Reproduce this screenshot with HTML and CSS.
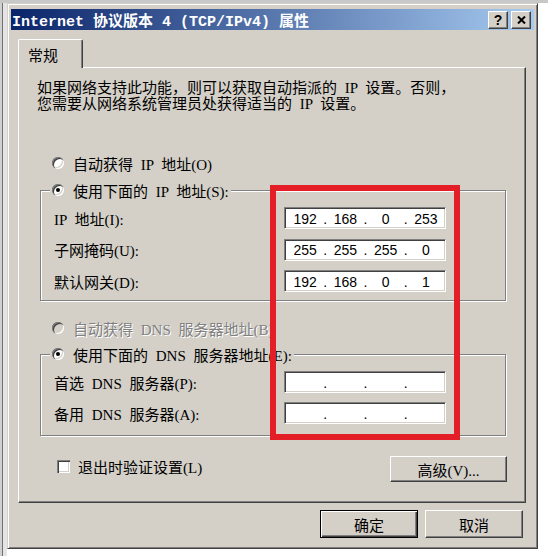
FILE: index.html
```html
<!DOCTYPE html>
<html lang="zh-CN">
<head>
<meta charset="utf-8">
<title>Internet 协议版本 4 (TCP/IPv4) 属性</title>
<link rel="stylesheet" href="styles.css">
</head>
<body>
<div class="desk">
  <div class="dialog">
    <div class="titlebar">
      <span class="title">Internet 协议版本 4 (TCP/IPv4) 属性</span>
      <div class="tbtns">
        <span class="tbtn">?</span>
        <span class="tbtn"><svg class="xicon" viewBox="0 0 9 8" width="9" height="8"><path d="M1 0.5 L8 7.5 M8 0.5 L1 7.5" stroke="#000" stroke-width="2" fill="none"/></svg></span>
      </div>
    </div>
    <div class="content">
      <div class="tabs"><div class="tab">常规</div></div>
      <div class="panel">
        <p class="intro">如果网络支持此功能，则可以获取自动指派的 IP 设置。否则，<br>您需要从网络系统管理员处获得适当的 IP 设置。</p>

        <div class="radio-row r1"><span class="radio"></span><span>自动获得 IP 地址(O)</span></div>

        <div class="group g1">
          <div class="legend"><span class="radio on"></span><span>使用下面的 IP 地址(S):</span></div>
          <div class="fields">
            <span>IP 地址(I):</span>
            <div class="ip"><span>192</span><i>.</i><span>168</span><i>.</i><span>0</span><i>.</i><span>253</span></div>
            <span>子网掩码(U):</span>
            <div class="ip"><span>255</span><i>.</i><span>255</span><i>.</i><span>255</span><i>.</i><span>0</span></div>
            <span>默认网关(D):</span>
            <div class="ip"><span>192</span><i>.</i><span>168</span><i>.</i><span>0</span><i>.</i><span>1</span></div>
          </div>
        </div>

        <div class="radio-row r3 disabled"><span class="radio"></span><span>自动获得 DNS 服务器地址(B)</span></div>

        <div class="group g2">
          <div class="legend"><span class="radio on"></span><span>使用下面的 DNS 服务器地址(E):</span></div>
          <div class="fields f2">
            <span>首选 DNS 服务器(P):</span>
            <div class="ip"><span></span><i>.</i><span></span><i>.</i><span></span><i>.</i><span></span></div>
            <span>备用 DNS 服务器(A):</span>
            <div class="ip"><span></span><i>.</i><span></span><i>.</i><span></span><i>.</i><span></span></div>
          </div>
        </div>

        <div class="bottom-row">
          <div class="check-row"><span class="check"></span><span>退出时验证设置(L)</span></div>
          <div class="btn adv">高级(V)...</div>
        </div>
      </div>
      <div class="actions">
        <div class="btn default">确定</div>
        <div class="btn">取消</div>
      </div>
    </div>
  </div>
  <div class="mark"></div>
</div>
</body>
</html>
```
FILE: styles.css
```css
* { box-sizing: border-box; }
html, body { margin: 0; padding: 0; }
body {
  width: 548px;
  height: 556px;
  overflow: hidden;
  background: #fff;
  font-family: "Liberation Serif", "Noto Sans CJK SC", serif;
  font-size: 15px;
  color: #000;
  word-spacing: 4px;
}
.desk {
  position: relative;
  width: 548px;
  height: 556px;
  padding: 3px 0 0 7px;
  background:
    linear-gradient(#c8c8c8, #c8c8c8) left top / 548px 3px no-repeat,
    linear-gradient(to right, #d0d0d0 0 2px, #707070 2px 3px, #e4e4e4 3px 7px) left top / 7px 556px no-repeat,
    #fff;
}
.dialog {
  width: 531px;
  height: 546px;
  background: #d4d0c8;
  border: 1px solid;
  border-color: #d4d0c8 #404040 #404040 #d4d0c8;
  box-shadow: inset 1px 1px 0 #fff, inset -1px -1px 0 #808080;
  padding: 5px 3px 0 3px;
}
.titlebar {
  height: 21px;
  display: flex;
  align-items: center;
  justify-content: space-between;
  background: linear-gradient(to right, #0a246a, #a6caf0);
  padding: 0 3px 0 1px;
}
.title {
  color: #fff;
  font: bold 15px "Liberation Mono", "Noto Sans CJK SC", monospace;
  word-spacing: 0;
  white-space: nowrap;
}
.tbtns { display: flex; gap: 3px; }
.tbtn {
  width: 20px;
  height: 18px;
  background: #d4d0c8;
  border: 1px solid;
  border-color: #fff #404040 #404040 #fff;
  box-shadow: inset -1px -1px 0 #808080;
  display: flex;
  align-items: center;
  justify-content: center;
  font: bold 14px "Liberation Sans", sans-serif;
  line-height: 1;
}
.xicon { display: block; }
.content { padding: 9px 8px 0 7px; }
.tabs { display: flex; height: 29px; margin-bottom: -1px; }
.tab {
  position: relative;
  z-index: 1;
  width: 65px;
  height: 29px;
  background: #d4d0c8;
  border-top: 1px solid #fff;
  border-left: 1px solid #fff;
  border-right: 1px solid #404040;
  box-shadow: inset -1px 0 0 #808080;
  border-radius: 2px 2px 0 0;
  padding-left: 9px;
  display: flex;
  align-items: center;
}
.panel {
  height: 436px;
  border: 1px solid;
  border-color: #fff #404040 #404040 #fff;
  box-shadow: inset -1px -1px 0 #808080;
  padding: 12px 0 0 18px;
}
.intro { margin: 0; line-height: 16px; white-space: nowrap; }
.radio-row { display: flex; align-items: center; gap: 9px; height: 20px; white-space: nowrap; }
.r1 { margin: 41px 0 0 15px; }
.r3 { margin: 17px 0 0 15px; }
.disabled { color: #808080; text-shadow: 1px 1px 0 #fff; }
.radio {
  flex: none;
  width: 12px;
  height: 12px;
  border-radius: 50%;
  background: #fff;
  box-shadow: inset 1px 1px 0 #808080, inset 2px 2px 0 #404040, inset -1px -1px 0 #fff, inset -2px -2px 0 #d4d0c8;
  display: flex;
  align-items: center;
  justify-content: center;
}
.disabled .radio { background: #d4d0c8; }
.radio.on::after {
  content: "";
  width: 4px;
  height: 4px;
  border-radius: 50%;
  background: #000;
}
.group {
  width: 466px;
  margin-left: 3px;
  border: 1px solid #808080;
  box-shadow: 1px 1px 0 #fff, inset 1px 1px 0 #fff;
}
.g1 { margin-top: 17px; padding-bottom: 8px; }
.g2 { margin-top: 16px; padding-bottom: 11px; }
.legend {
  display: flex;
  align-items: center;
  gap: 9px;
  width: fit-content;
  height: 20px;
  margin: -11px 0 0 9px;
  padding: 0 2px;
  background: #d4d0c8;
  white-space: nowrap;
}
.fields {
  display: grid;
  grid-template-columns: 230px 162px;
  grid-auto-rows: 22px;
  row-gap: 9.5px;
  align-items: center;
  margin: 7px 0 0 13px;
  white-space: nowrap;
}
.f2 { row-gap: 9px; }
.ip {
  height: 22px;
  background: #fff;
  border: 1px solid;
  border-color: #808080 #fff #fff #808080;
  box-shadow: inset 1px 1px 0 #404040, inset -1px -1px 0 #d4d0c8;
  display: grid;
  grid-template-columns: 1fr 4px 1fr 4px 1fr 4px 1fr;
  align-items: center;
  padding: 1px 1px 0 2px;
  font: 14px "Liberation Sans", sans-serif;
  word-spacing: 0;
}
.ip span { text-align: center; }
.ip i { font-style: normal; text-align: center; }
.bottom-row {
  display: flex;
  justify-content: space-between;
  align-items: flex-start;
  width: 470px;
  margin-top: 20px;
}
.check-row { display: flex; align-items: center; gap: 8px; height: 20px; margin-left: 20px; white-space: nowrap; }
.check {
  flex: none;
  width: 13px;
  height: 13px;
  background: #fff;
  box-shadow: inset 1px 1px 0 #808080, inset 2px 2px 0 #404040, inset -1px -1px 0 #fff, inset -2px -2px 0 #d4d0c8;
}
.btn {
  width: 98px;
  height: 28px;
  background: #d4d0c8;
  border: 1px solid;
  border-color: #fff #404040 #404040 #fff;
  box-shadow: inset -1px -1px 0 #808080;
  display: flex;
  align-items: center;
  justify-content: center;
  white-space: nowrap;
  word-spacing: 0;
}
.adv { width: 117px; height: 26px; }
.btn.default {
  border-color: #000;
  box-shadow: inset 1px 1px 0 #fff, inset -1px -1px 0 #404040, inset -2px -2px 0 #808080;
}
.actions { display: flex; justify-content: flex-end; gap: 7px; margin: 7px 3px 0 0; }
.mark {
  position: absolute;
  left: 270px;
  top: 185px;
  width: 190px;
  height: 255px;
  border: 6px solid #e31e26;
}
```
